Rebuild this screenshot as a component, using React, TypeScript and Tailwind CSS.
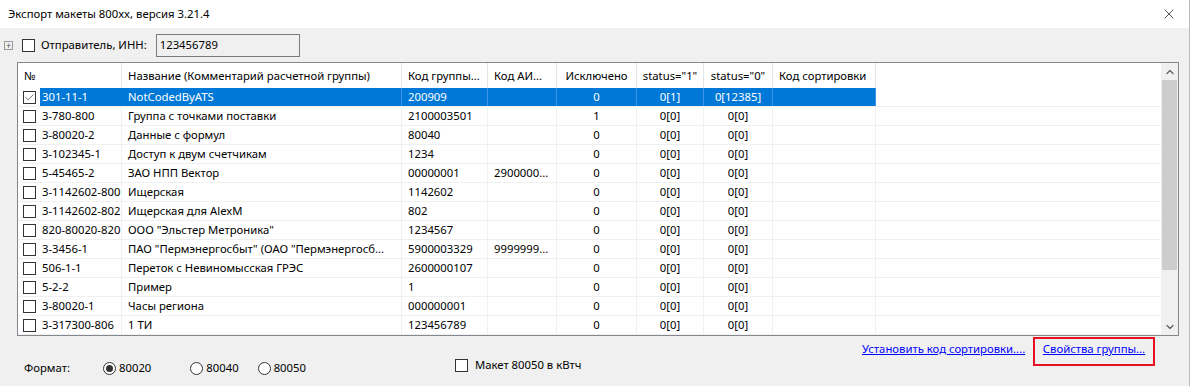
import { X, ChevronUp, ChevronDown, Check } from "lucide-react";

const font = { fontFamily: '"Segoe UI", "Noto Sans", "Open Sans", sans-serif' };

const cols = [
  { label: "Название (Комментарий расчетной группы)", w: "w-[280px]", align: "left" },
  { label: "Код группы...", w: "w-[86px]", align: "left" },
  { label: "Код АИ...", w: "w-[69px]", align: "left" },
  { label: "Исключено", w: "w-[80px]", align: "center" },
  { label: 'status="1"', w: "w-[67px]", align: "center" },
  { label: 'status="0"', w: "w-[69px]", align: "center" },
  { label: "Код сортировки", w: "w-[103px]", align: "left" },
];

const rows = [
  ["301-11-1", "NotCodedByATS", "200909", "", "0", "0[1]", "0[12385]", ""],
  ["3-780-800", "Группа с точками поставки", "2100003501", "", "1", "0[0]", "0[0]", ""],
  ["3-80020-2", "Данные с формул", "80040", "", "0", "0[0]", "0[0]", ""],
  ["3-102345-1", "Доступ к двум счетчикам", "1234", "", "0", "0[0]", "0[0]", ""],
  ["5-45465-2", "ЗАО НПП Вектор", "00000001", "2900000...", "0", "0[0]", "0[0]", ""],
  ["3-1142602-800", "Ищерская", "1142602", "", "0", "0[0]", "0[0]", ""],
  ["3-1142602-802", "Ищерская для AlexM", "802", "", "0", "0[0]", "0[0]", ""],
  ["820-80020-820", 'ООО "Эльстер Метроника"', "1234567", "", "0", "0[0]", "0[0]", ""],
  ["3-3456-1", 'ПАО "Пермэнергосбыт" (ОАО "Пермэнергосб...', "5900003329", "9999999...", "0", "0[0]", "0[0]", ""],
  ["506-1-1", "Переток с Невиномысская ГРЭС", "2600000107", "", "0", "0[0]", "0[0]", ""],
  ["5-2-2", "Пример", "1", "", "0", "0[0]", "0[0]", ""],
  ["3-80020-1", "Часы региона", "000000001", "", "0", "0[0]", "0[0]", ""],
  ["3-317300-806", "1 ТИ", "123456789", "", "0", "0[0]", "0[0]", ""],
];

function Box({ checked = false }: { checked?: boolean }) {
  return (
    <span className="flex h-[13px] w-[13px] shrink-0 items-center justify-center border border-[#333] bg-white">
      {checked && <Check size={11} strokeWidth={1.5} className="text-[#333]" />}
    </span>
  );
}

function Radio({ checked = false, label, className = "" }: { checked?: boolean; label: string; className?: string }) {
  return (
    <div className={`flex items-center gap-[3px] ${className}`}>
      <span className="flex h-[13px] w-[13px] items-center justify-center rounded-full border border-[#333] bg-white">
        {checked && <span className="h-[7px] w-[7px] rounded-full bg-[#333]" />}
      </span>
      <span>{label}</span>
    </div>
  );
}

export default function App() {
  return (
    <div style={font} className="flex h-[386px] w-[1190px] flex-col overflow-hidden border-r border-[#b9b9b9] bg-[#f0f0f0] text-[11.3px] leading-[16px] text-black">
      <div className="flex h-[28px] shrink-0 items-center justify-between bg-white pl-[8px] pr-[12px]">
        <span>Экспорт макеты 800xx, версия 3.21.4</span>
        <X size={16} strokeWidth={1} className="text-black" />
      </div>

      <div className="flex h-[34px] shrink-0 items-center pl-[4px]">
        <span className="flex h-[9px] w-[9px] items-center justify-center border border-[#999] text-[9px] leading-none text-[#555]">+</span>
        <span className="ml-[9px]"><Box /></span>
        <span className="ml-[6px]">Отправитель, ИНН:</span>
        <div className="ml-[9px] flex h-[23px] w-[144px] items-center border border-[#7a7a7a] bg-[#f0f0f0] pl-[3px]">123456789</div>
      </div>

      <div className="ml-[17px] flex h-[274px] w-[1162px] shrink-0 border border-[#828790] bg-white">
        <div className="flex min-w-0 flex-1 flex-col">
          <div className="flex h-[25px] shrink-0 items-center">
            <div className="flex h-full w-[104px] items-center border-r border-[#e5e5e5] pl-[6px]">№</div>
            {cols.map((c) => (
              <div
                key={c.label}
                className={`flex h-full ${c.w} items-center border-r border-[#e5e5e5] ${c.align === "center" ? "justify-center" : "pl-[6px]"}`}
              >
                {c.label}
              </div>
            ))}
          </div>
          {rows.map((r, i) => {
            const sel = i === 0;
            return (
              <div key={r[0]} className="flex h-[19px] shrink-0 border-b border-[#f0f0f0]">
                <div className={`flex w-[104px] items-center whitespace-nowrap border-r ${sel ? "border-[#0078d7]" : "border-[#f0f0f0]"}`}>
                  <span className="ml-[5px]"><Box checked={sel} /></span>
                  <span className={`ml-[4px] flex h-full flex-1 items-center pl-[2px] ${sel ? "bg-[#0078d7] text-white" : ""}`}>{r[0]}</span>
                </div>
                {cols.map((c, j) => (
                  <div
                    key={c.label}
                    className={`flex ${c.w} items-center overflow-hidden whitespace-nowrap border-r ${sel ? "border-[#3d94e0] bg-[#0078d7] text-white" : "border-[#f0f0f0]"} ${c.align === "center" ? "justify-center" : "pl-[6px]"}`}
                  >
                    {r[j + 1]}
                  </div>
                ))}
              </div>
            );
          })}
        </div>
        <div className="flex w-[17px] shrink-0 flex-col bg-[#f0f0f0]">
          <div className="flex h-[17px] items-center justify-center text-[#606060]">
            <ChevronUp size={12} strokeWidth={2.5} />
          </div>
          <div className="mx-[1px] h-[190px] bg-[#cdcdcd]" />
          <div className="flex-1" />
          <div className="flex h-[17px] items-center justify-center text-[#606060]">
            <ChevronDown size={12} strokeWidth={2.5} />
          </div>
        </div>
      </div>

      <div className="relative flex-1">
        <div className="absolute left-[24px] top-[24px] flex items-center">
          <span className="w-[79px]">Формат:</span>
          <Radio checked label="80020" />
          <Radio label="80040" className="ml-[39px]" />
          <Radio label="80050" className="ml-[19px]" />
        </div>
        <div className="absolute left-[455px] top-[21px] flex items-center gap-[7px]">
          <Box />
          <span>Макет 80050 в кВтч</span>
        </div>
        <div className="absolute left-[862px] top-[5px] text-[#0000ff] underline">Установить код сортировки....</div>
        <div className="absolute left-[1033px] top-[1px] flex h-[29px] w-[122px] justify-center border-2 border-[#e81123] pt-[2px]">
          <span className="text-[#0000ff] underline">Свойства группы...</span>
        </div>
      </div>
    </div>
  );
}
